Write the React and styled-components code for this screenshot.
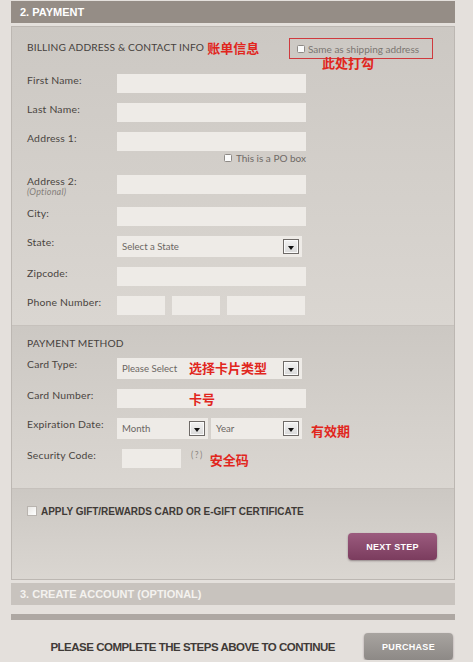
import React from "react";
import styled, { createGlobalStyle } from "styled-components";

const Global = createGlobalStyle`
  html, body { margin: 0; padding: 0; }
  body {
    background: #e4e0dc;
    font-family: Lato, "Open Sans", sans-serif;
    color: #4b4642;
  }
`;

const Page = styled.div`
  width: 444px;
  margin-left: 11px;
  padding-top: 1px;
  display: flex;
  flex-direction: column;
`;

const StepBar = styled.div`
  height: 22px;
  box-sizing: border-box;
  padding-left: 9px;
  display: flex;
  align-items: center;
  background: ${(p) => (p.$muted ? "#c8c3be" : "#958d86")};
  color: ${(p) => (p.$muted ? "#f4f2ef" : "#ffffff")};
  font-family: "Liberation Sans", Arial, sans-serif;
  font-weight: bold;
  font-size: 11px;
  margin-top: ${(p) => p.$mt || 0}px;
`;

const Panel = styled.div`
  margin-top: 3px;
  border: 1px solid #bcb7b2;
  display: flex;
  flex-direction: column;
`;

const Section = styled.div`
  padding: ${(p) => p.$pad};
  background: linear-gradient(180deg, #ccc8c3 0%, #dad6d1 100%);
  border-top: ${(p) => (p.$divider ? "1px solid #c6c1bc" : "none")};
  display: flex;
  flex-direction: column;
`;

const HeadRow = styled.div`
  height: 21px;
  display: flex;
  align-items: flex-start;
`;

const Title = styled.div`
  font-size: 10.2px;
  line-height: 12px;
  color: #46413d;
  letter-spacing: 0.15px;
  margin-top: ${(p) => p.$mt || 0}px;
`;

const Note = styled.span`
  font-family: "Noto Sans CJK SC", sans-serif;
  font-weight: bold;
  font-size: 13px;
  line-height: 14px;
  color: #e1261d;
  white-space: nowrap;
  margin-left: ${(p) => p.$ml || 0}px;
  margin-top: ${(p) => p.$mt || 0}px;
`;

const FloatNote = styled(Note)`
  position: absolute;
  left: ${(p) => p.$left}px;
  top: ${(p) => p.$top};
  pointer-events: none;
`;

const SameBox = styled.label`
  position: relative;
  margin-left: auto;
  margin-right: 6px;
  width: 144px;
  height: 21px;
  box-sizing: border-box;
  border: 1px solid #cf3a3e;
  display: flex;
  align-items: center;
  gap: 3px;
  padding-left: 7px;
  font-size: 10px;
  color: #7b7671;
`;

const Check = styled.input.attrs({ type: "checkbox" })`
  appearance: none;
  margin: 0;
  width: ${(p) => p.$size || 8}px;
  height: ${(p) => p.$size || 8}px;
  box-sizing: border-box;
  border: 1px solid ${(p) => (p.$soft ? "#b9b4af" : "#8e8a86")};
  border-radius: ${(p) => (p.$soft ? 0 : 1.5)}px;
  background: ${(p) => (p.$soft ? "linear-gradient(135deg,#e9e7e4,#ffffff)" : "#fbfbfb")};
  flex: none;
`;

const Rows = styled.div`
  margin-top: ${(p) => p.$mt}px;
  display: flex;
  flex-direction: column;
  gap: 10px;
`;

const Row = styled.div`
  display: grid;
  grid-template-columns: 90px auto;
  align-items: start;
`;

const Label = styled.div`
  font-size: 10.4px;
  line-height: 12px;
  color: #4a4541;
  letter-spacing: 0.2px;
  white-space: nowrap;
`;

const Optional = styled.div`
  font-size: 9px;
  line-height: 10px;
  font-style: italic;
  color: #857f7a;
`;

const FieldCol = styled.div`
  display: flex;
  flex-direction: column;
`;

const FieldLine = styled.div`
  display: flex;
  align-items: ${(p) => p.$align || "center"};
`;

const Input = styled.div`
  position: relative;
  width: ${(p) => p.$w || 189}px;
  height: 19px;
  background: #eeebe7;
  margin-left: ${(p) => p.$ml || 0}px;
  flex: none;
`;

const Select = styled.div`
  position: relative;
  width: ${(p) => p.$w || 185}px;
  height: 21px;
  box-sizing: border-box;
  background: #eeebe7;
  display: flex;
  align-items: center;
  padding-left: 5px;
  font-size: 9.6px;
  color: #6b6662;
  margin-left: ${(p) => p.$ml || 0}px;
  flex: none;
`;

const Arrow = styled.span`
  margin-left: auto;
  margin-right: 3px;
  width: 16px;
  height: 15px;
  box-sizing: border-box;
  border: 1px solid #6e6a67;
  box-shadow: inset 0 0 0 1px #fafafa;
  background: linear-gradient(180deg, #f2f2f2 0%, #d9d9d9 100%);
  display: flex;
  align-items: center;
  justify-content: center;
  padding-top: 2px;
`;

const Tri = styled.span`
  width: 0;
  height: 0;
  border-left: 3.5px solid transparent;
  border-right: 3.5px solid transparent;
  border-top: 4px solid #111;
`;

const PoRow = styled.label`
  height: 14px;
  width: 189px;
  display: flex;
  align-items: center;
  justify-content: flex-end;
  gap: 4px;
  font-size: 10px;
  color: #6f6a66;
`;

const Hint = styled.span`
  font-size: 8.5px;
  color: #8a8580;
  letter-spacing: 1.5px;
  margin-left: 10px;
  margin-top: 1px;
`;

const GiftRow = styled.label`
  display: flex;
  align-items: center;
  gap: 4px;
  height: 10px;
  font-family: "Liberation Sans", Arial, sans-serif;
  font-weight: bold;
  font-size: 10px;
  letter-spacing: -0.05px;
  color: #3f3a36;
`;

const Actions = styled.div`
  margin-top: 17px;
  display: flex;
  justify-content: flex-end;
`;

const Button = styled.button`
  width: 89px;
  height: 27px;
  border: none;
  border-radius: 4px;
  margin: 0 2px 0 0;
  padding: 0;
  color: #fff;
  font-family: "Liberation Sans", Arial, sans-serif;
  font-weight: bold;
  font-size: 9px;
  letter-spacing: 0.3px;
  background: ${(p) =>
    p.$grey
      ? "linear-gradient(180deg, #a8a4a0 0%, #8d8986 100%)"
      : "linear-gradient(180deg, #9b5b7e 0%, #7b3c5e 100%)"};
  box-shadow: 0 1px 2px rgba(60, 40, 50, 0.45);
  flex: none;
`;

const Rule = styled.div`
  margin-top: 9px;
  height: 6px;
  background: #aea8a3;
`;

const Footer = styled.div`
  padding-top: 13px;
  display: flex;
  align-items: center;
  justify-content: flex-end;
  gap: 29px;
`;

const FooterText = styled.div`
  font-family: "Liberation Sans", Arial, sans-serif;
  font-weight: bold;
  font-size: 11.5px;
  letter-spacing: -0.5px;
  color: #3f3a37;
`;

function Drop({ children, w, ml, note }) {
  return (
    <Select $w={w} $ml={ml}>
      {children}
      {note}
      <Arrow>
        <Tri />
      </Arrow>
    </Select>
  );
}

export default function App() {
  return (
    <>
      <Global />
      <Page>
        <StepBar>2. PAYMENT</StepBar>
        <Panel>
          <Section $pad="11px 15px 10px">
            <HeadRow>
              <Title $mt={3}>BILLING ADDRESS &amp; CONTACT INFO</Title>
              <Note $ml={3} $mt={3}>账单信息</Note>
              <SameBox>
                <Check />
                Same as shipping address
                <FloatNote $left={32} $top="calc(100% - 2px)">此处打勾</FloatNote>
              </SameBox>
            </HeadRow>
            <Rows $mt={15}>
              <Row>
                <Label>First Name:</Label>
                <Input />
              </Row>
              <Row>
                <Label>Last Name:</Label>
                <Input />
              </Row>
              <Row>
                <Label>Address 1:</Label>
                <FieldCol>
                  <Input />
                  <PoRow>
                    <Check />
                    This is a PO box
                  </PoRow>
                </FieldCol>
              </Row>
              <Row>
                <Label>
                  Address 2:
                  <Optional>(Optional)</Optional>
                </Label>
                <Input />
              </Row>
              <Row>
                <Label>City:</Label>
                <Input />
              </Row>
              <Row>
                <Label>State:</Label>
                <Drop>Select a State</Drop>
              </Row>
              <Row>
                <Label>Zipcode:</Label>
                <Input />
              </Row>
              <Row>
                <Label>Phone Number:</Label>
                <FieldLine>
                  <Input $w={48} />
                  <Input $w={48} $ml={7} />
                  <Input $w={78} $ml={7} />
                </FieldLine>
              </Row>
            </Rows>
          </Section>

          <Section $divider $pad="11px 15px 20px">
            <Title>PAYMENT METHOD</Title>
            <Rows $mt={9}>
              <Row>
                <Label>Card Type:</Label>
                <Drop note={<FloatNote $left={72} $top="3px">选择卡片类型</FloatNote>}>
                  Please Select
                </Drop>
              </Row>
              <Row>
                <Label>Card Number:</Label>
                <Input>
                  <FloatNote $left={72} $top="3px">卡号</FloatNote>
                </Input>
              </Row>
              <Row>
                <Label>Expiration Date:</Label>
                <FieldLine $align="flex-start">
                  <Drop w={91}>Month</Drop>
                  <Drop w={91} ml={3}>Year</Drop>
                  <Note $ml={9} $mt={6}>有效期</Note>
                </FieldLine>
              </Row>
              <Row>
                <Label>Security Code:</Label>
                <FieldLine $align="flex-start">
                  <Input $w={59} $ml={5} />
                  <Hint>(?)</Hint>
                  <Note $ml={6} $mt={4}>安全码</Note>
                </FieldLine>
              </Row>
            </Rows>
          </Section>

          <Section $divider $pad="17px 15px 19px">
            <GiftRow>
              <Check $size={10} $soft />
              APPLY GIFT/REWARDS CARD OR E-GIFT CERTIFICATE
            </GiftRow>
            <Actions>
              <Button>NEXT STEP</Button>
            </Actions>
          </Section>
        </Panel>
        <StepBar $muted $mt={3}>3. CREATE ACCOUNT (OPTIONAL)</StepBar>
        <Rule />
        <Footer>
          <FooterText>PLEASE COMPLETE THE STEPS ABOVE TO CONTINUE</FooterText>
          <Button $grey>PURCHASE</Button>
        </Footer>
      </Page>
    </>
  );
}
